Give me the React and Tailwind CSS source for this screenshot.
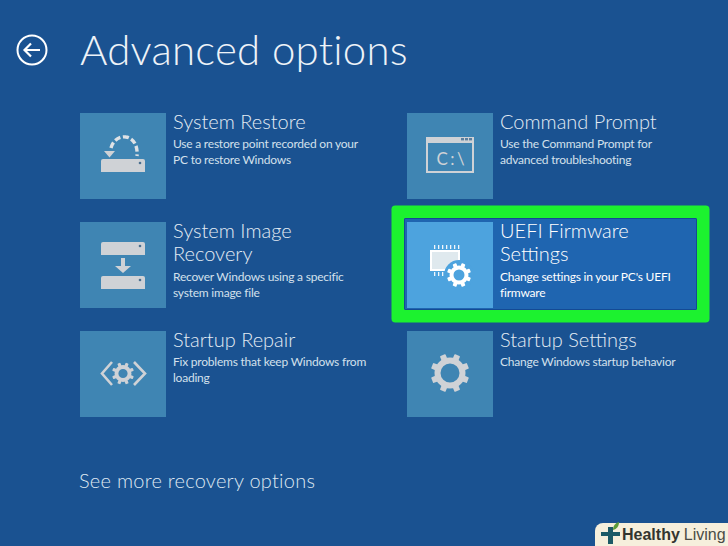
import React from 'react';

const iconGrey = '#cfd2d6';

function Gear({ cx, cy, r, hole, tooth, toothW, color }) {
  const angles = [0, 45, 90, 135, 180, 225, 270, 315];
  const mid = (r + hole) / 2;
  return (
    <g>
      <circle cx={cx} cy={cy} r={mid} fill="none" stroke={color} strokeWidth={r - hole} />
      {angles.map((a) => (
        <rect
          key={a}
          x={cx - toothW / 2}
          y={cy - r - tooth}
          width={toothW}
          height={tooth + 1}
          rx="0.8"
          fill={color}
          transform={`rotate(${a + 22.5} ${cx} ${cy})`}
        />
      ))}
    </g>
  );
}

function Drive({ y }) {
  return (
    <g>
      <path d={`M23 ${y}H63a2 2 0 0 1 2 2V${y + 13}H21V${y + 2}a2 2 0 0 1 2-2z`} fill={iconGrey} />
      <circle cx="60" cy={y + 4} r="1.3" fill="#4a6f8f" />
    </g>
  );
}

function RestoreIcon() {
  return (
    <svg viewBox="0 0 86 86" className="w-full h-full">
      <path
        d="M31 35C33 27 40 23 46 24C53 25 58 32 57 43"
        fill="none"
        stroke="#dfe2e5"
        strokeWidth="3.4"
        strokeDasharray="6 2.6"
      />
      <path d="M24 38H35L29.5 44.5Z" fill={iconGrey} />
      <Drive y={46} />
    </svg>
  );
}

function CommandIcon() {
  return (
    <svg viewBox="0 0 86 86" className="w-full h-full">
      <rect x="20" y="25" width="46" height="34" fill="none" stroke={iconGrey} strokeWidth="2" />
      <rect x="19" y="24" width="48" height="6" fill={iconGrey} />
      <rect x="54" y="25" width="3" height="2.4" fill="#5a7f9f" />
      <rect x="58" y="25" width="3" height="2.4" fill="#5a7f9f" />
      <rect x="62" y="25" width="3" height="2.4" fill="#5a7f9f" />
      <text x="29.5" y="52" fill={iconGrey} fontSize="17" fontFamily="'Lato', sans-serif" letterSpacing="2.5">
        C:\
      </text>
    </svg>
  );
}

function ImageIcon() {
  return (
    <svg viewBox="0 0 86 86" className="w-full h-full">
      <Drive y={20} />
      <path d="M41 36H45V44H51L43 51L35 44H41Z" fill={iconGrey} />
      <Drive y={54} />
    </svg>
  );
}

function RepairIcon() {
  return (
    <svg viewBox="0 0 86 86" className="w-full h-full">
      <path d="M32 31L22 42.5L32 54M54 31L65 42.5L54 54" fill="none" stroke={iconGrey} strokeWidth="2.6" />
      <Gear cx={43} cy={42.5} r={8.5} hole={4.6} tooth={2.6} toothW={3.2} color={iconGrey} />
    </svg>
  );
}

function GearIcon() {
  return (
    <svg viewBox="0 0 86 86" className="w-full h-full">
      <Gear cx={43} cy={42} r={15.5} hole={9.5} tooth={3.8} toothW={6} color={iconGrey} />
    </svg>
  );
}

function UefiIcon() {
  const top = [27, 31, 35, 39, 43, 47, 51];
  const bottom = [27, 31, 35];
  return (
    <svg viewBox="0 0 86 86" className="w-full h-full">
      {top.map((x) => (
        <rect key={x} x={x} y="23" width="1.3" height="4" fill="#f2f6fa" />
      ))}
      {bottom.map((x) => (
        <rect key={x} x={x} y="50" width="1.3" height="4" fill="#f2f6fa" />
      ))}
      <rect x="24" y="29" width="28" height="19" fill="#dfe9ee" stroke="#ffffff" strokeWidth="2" />
      <circle cx="52" cy="53" r="15" fill="#4da3de" />
      <Gear cx={52} cy={53} r={9.5} hole={5.5} tooth={2.6} toothW={4} color="#ffffff" />
    </svg>
  );
}

function OptionText({ title, lines, selected }) {
  return (
    <div className="-mt-[3.5px] ml-[7px] flex-1">
      <h2
        className={`text-[20px] leading-[23.5px] font-light whitespace-pre-line ${
          selected ? 'text-white' : 'text-[#e4ecf4]'
        }`}
      >
        {title}
      </h2>
      <p
        className={`mt-[3px] text-[12px] leading-[16px] tracking-[-0.22px] whitespace-pre-line ${
          selected ? 'text-white' : 'text-[#d3e0ec]'
        }`}
      >
        {lines}
      </p>
    </div>
  );
}

function Option({ title, lines, icon }) {
  return (
    <div className="flex h-[86px]">
      <div className="w-[86px] h-[86px] shrink-0 bg-[#3f85b3]">{icon}</div>
      <OptionText title={title} lines={lines} />
    </div>
  );
}

function SelectedOption({ title, lines, icon }) {
  return (
    <div className="flex h-[92px] w-[293px] -ml-[3px] -my-[4px] pl-[2px] py-[3px] bg-[#1f65b0] border border-[#144a94] rounded-[1px] shadow-[0_0_0_12.5px_#1cf22f]">
      <div className="w-[86px] h-[86px] shrink-0 bg-[#4da3de]">{icon}</div>
      <OptionText title={title} lines={lines} selected />
    </div>
  );
}

function BackIcon() {
  return (
    <svg viewBox="0 0 32 32" className="w-[32px] h-[32px]">
      <circle cx="16" cy="16" r="14.5" fill="none" stroke="#ffffff" strokeWidth="2" />
      <path d="M8.5 16H24M15 9.5L8.5 16L15 22.5" fill="none" stroke="#ffffff" strokeWidth="2.2" />
    </svg>
  );
}

function Badge() {
  return (
    <div className="absolute right-0 bottom-0 w-[133px] h-[23px] bg-[#f6efdc] rounded-tl-[8px] flex items-center pl-[5px] font-['Liberation_Sans',sans-serif]">
      <svg viewBox="0 0 22 24" className="w-[22px] h-[24px] shrink-0 -mt-[3px]">
        <path d="M8 6H13V11H20V15H13V23H8V15H1V11H8Z" fill="#1c5a66" />
        <path d="M13 9C13 5 15 2 19 1C19 5 17 8 13 9Z" fill="#5c9c3a" />
      </svg>
      <span className="text-[16px] leading-none font-bold text-[#33352f]">Healthy</span>
      <span className="ml-[4px] text-[16px] leading-none text-[#4a4c46]">Living</span>
    </div>
  );
}

export default function App() {
  return (
    <div className="relative w-[728px] h-[546px] overflow-hidden bg-[#1a5291] font-['Lato',sans-serif]">
      <header className="flex items-start pl-[16px] pt-[34px] h-[113px]">
        <BackIcon />
        <h1 className="ml-[32px] -mt-[10px] text-[42px] leading-[50px] font-light text-[#eef3f8] tracking-[0.2px]">
          Advanced options
        </h1>
      </header>

      <main className="pl-[80px] grid grid-cols-[327px_1fr] gap-y-[23px]">
        <Option title="System Restore" lines={'Use a restore point recorded on your\nPC to restore Windows'} icon={<RestoreIcon />} />
        <Option title="Command Prompt" lines={'Use the Command Prompt for\nadvanced troubleshooting'} icon={<CommandIcon />} />
        <Option title={'System Image\nRecovery'} lines={'Recover Windows using a specific\nsystem image file'} icon={<ImageIcon />} />
        <SelectedOption title={'UEFI Firmware\nSettings'} lines={"Change settings in your PC's UEFI\nfirmware"} icon={<UefiIcon />} />
        <Option title="Startup Repair" lines={'Fix problems that keep Windows from\nloading'} icon={<RepairIcon />} />
        <Option title="Startup Settings" lines="Change Windows startup behavior" icon={<GearIcon />} />
      </main>

      <p className="mt-[50px] pl-[79px] text-[20px] leading-[27px] font-light text-[#dfe8f1] tracking-[0.25px]">
        See more recovery options
      </p>

      <Badge />
    </div>
  );
}
